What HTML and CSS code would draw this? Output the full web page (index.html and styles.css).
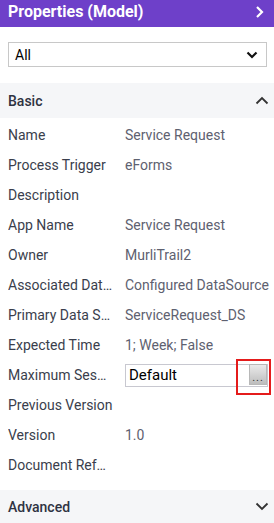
FILE: index.html
```html
<!DOCTYPE html>
<html lang="en">

<head>
    <meta charset="UTF-8" />
    <title>Properties (Model)</title>
    <link rel="stylesheet" href="styles.css">
</head>

<body>
    <div class="panel">
        <div class="panel-head">
            <h1>Properties (Model)</h1>
            <svg class="head-arrow" width="10" height="14" viewBox="0 0 10 14">
                <path d="M2 2 L7 7 L2 12" fill="none" stroke="#fff" stroke-width="2.2" />
            </svg>
        </div>

        <div class="filter">
            <div class="select">
                <span>All</span>
                <svg width="12" height="8" viewBox="0 0 12 8">
                    <path d="M1.5 1.5 L6 6 L10.5 1.5" fill="none" stroke="#111" stroke-width="2.2" />
                </svg>
            </div>
        </div>

        <div class="group-head">
            <span>Basic</span>
            <svg width="14" height="9" viewBox="0 0 14 9">
                <path d="M1.5 7.5 L7 2 L12.5 7.5" fill="none" stroke="#333" stroke-width="1.8" />
            </svg>
        </div>

        <div class="rows">
            <div class="row"><span class="label">Name</span><span class="value">Service Request</span></div>
            <div class="row"><span class="label">Process Trigger</span><span class="value">eForms</span></div>
            <div class="row"><span class="label">Description</span><span class="value"></span></div>
            <div class="row"><span class="label">App Name</span><span class="value">Service Request</span></div>
            <div class="row"><span class="label">Owner</span><span class="value">MurliTrail2</span></div>
            <div class="row"><span class="label">Associated DataSource</span><span class="value">Configured DataSource</span></div>
            <div class="row"><span class="label">Primary Data Source</span><span class="value">ServiceRequest_DS</span></div>
            <div class="row"><span class="label">Expected Time</span><span class="value">1; Week; False</span></div>
            <div class="row">
                <span class="label">Maximum Session</span>
                <div class="field">
                    <span>Default</span>
                    <div class="pick-wrap">
                        <div class="pick">...</div>
                    </div>
                </div>
            </div>
            <div class="row"><span class="label">Previous Version</span><span class="value"></span></div>
            <div class="row"><span class="label">Version</span><span class="value">1.0</span></div>
            <div class="row"><span class="label">Document Reference</span><span class="value"></span></div>
        </div>

        <div class="group-head advanced">
            <span>Advanced</span>
            <svg width="14" height="9" viewBox="0 0 14 9">
                <path d="M1.5 1.5 L7 7 L12.5 1.5" fill="none" stroke="#333" stroke-width="1.8" />
            </svg>
        </div>
    </div>
</body>

</html>
```

FILE: styles.css
```css
* {
    box-sizing: border-box;
    margin: 0;
    padding: 0;
}

body {
    font-family: Roboto, "Liberation Sans", sans-serif;
    background: #fff;
    overflow: hidden;
}

.panel {
    width: 274px;
}

.panel-head {
    height: 27px;
    background: #6e40c9;
    display: flex;
    align-items: center;
    justify-content: space-between;
    padding: 0 9px 3px 8px;
}

.panel-head h1 {
    font-size: 16px;
    font-weight: 700;
    color: #fff;
    line-height: 20px;
}

.filter {
    padding: 15px 7px 16px 8px;
}

.select {
    height: 25px;
    border: 1px solid #c8c8c8;
    display: flex;
    align-items: center;
    justify-content: space-between;
    padding: 0 8px 0 6px;
    font-size: 14px;
    color: #000;
}

.group-head {
    height: 35px;
    background: #f5f6f8;
    display: flex;
    align-items: center;
    justify-content: space-between;
    padding: 0 5px 0 8px;
    font-size: 14px;
    font-weight: 500;
    color: #2f3342;
}

.rows {
    padding: 2px 0 10px;
}

.row {
    height: 30px;
    display: flex;
    align-items: center;
    padding-left: 8px;
    font-size: 14px;
}

.label {
    width: 117px;
    flex-shrink: 0;
    color: #3a3e4c;
    white-space: nowrap;
    overflow: hidden;
    text-overflow: ellipsis;
    padding-right: 12px;
}

.value {
    color: #5e6170;
    white-space: nowrap;
}

.field {
    width: 143px;
    height: 23px;
    border: 1px solid #c8c8d0;
    display: flex;
    align-items: center;
    justify-content: space-between;
    padding-left: 3px;
    color: #000;
    font-size: 15px;
}

.pick-wrap {
    position: relative;
    width: 24px;
    height: 22px;
}

.pick {
    position: absolute;
    top: 0;
    right: 0;
    width: 18px;
    height: 21px;
    background: linear-gradient(#eaeaea, #bdbdbd);
    border: 1px solid #b8b8b8;
    font-size: 11px;
    line-height: 26px;
    letter-spacing: 1px;
    text-align: center;
    color: #333;
    overflow: hidden;
}

.pick-wrap::after {
    content: "";
    position: absolute;
    top: -5px;
    left: -7px;
    width: 31px;
    height: 32px;
    border: 2px solid #e41b1b;
}

.advanced {
    height: 33px;
}
```
